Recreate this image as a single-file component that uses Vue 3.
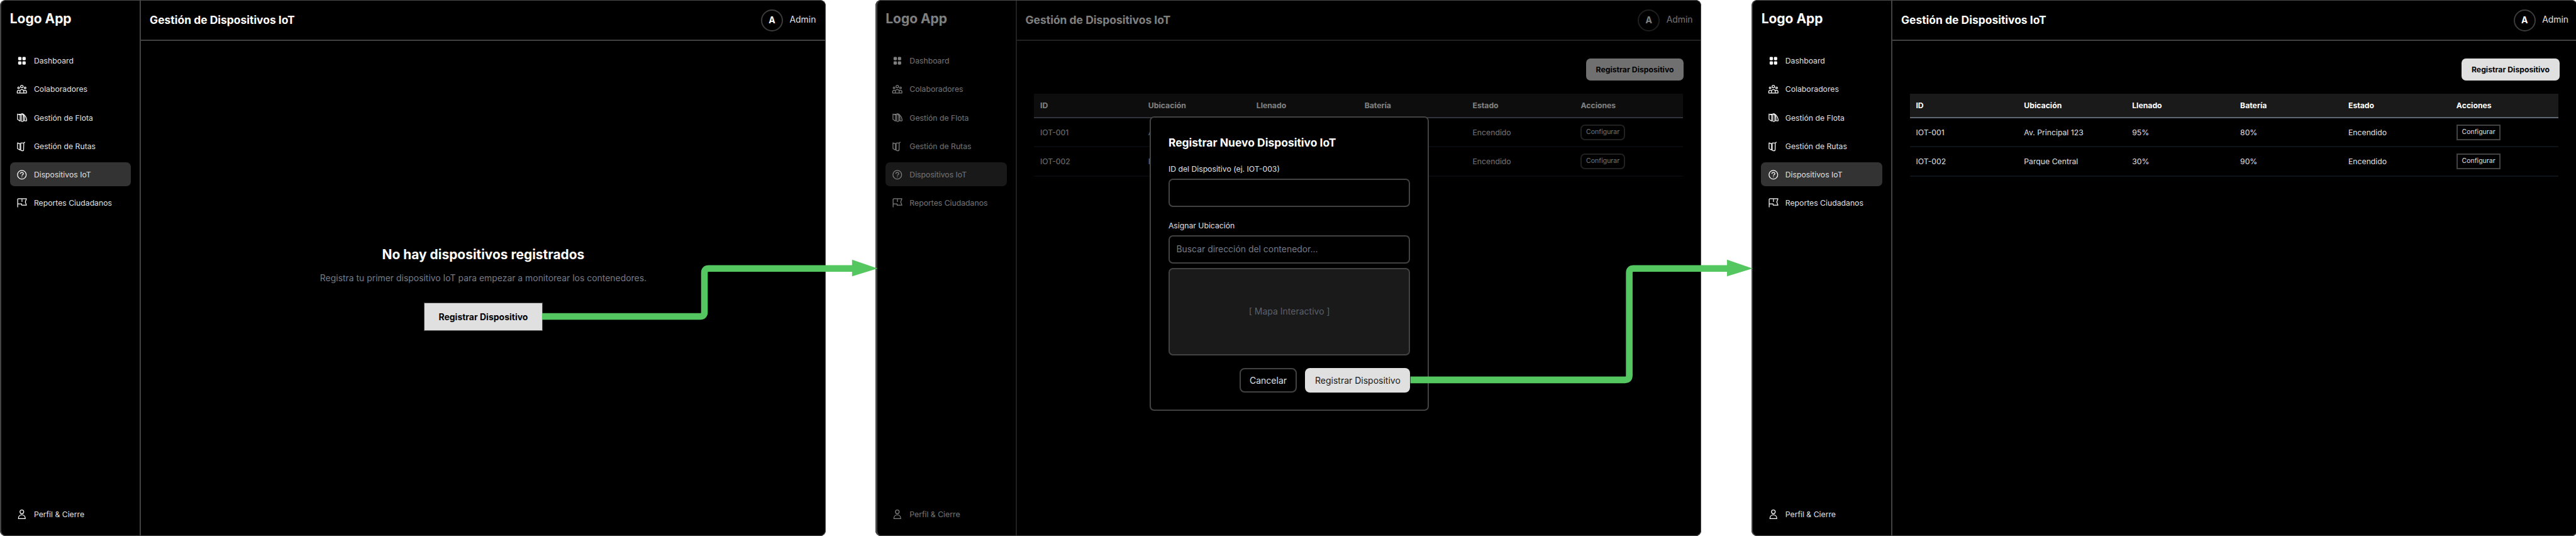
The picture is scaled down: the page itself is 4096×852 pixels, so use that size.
<script setup>
const nav = [
  { icon: 'dashboard', label: 'Dashboard' },
  { icon: 'team', label: 'Colaboradores' },
  { icon: 'fleet', label: 'Gestión de Flota' },
  { icon: 'routes', label: 'Gestión de Rutas' },
  { icon: 'device', label: 'Dispositivos IoT', active: true },
  { icon: 'flag', label: 'Reportes Ciudadanos' },
]

const columns = ['ID', 'Ubicación', 'Llenado', 'Batería', 'Estado', 'Acciones']
const devices = [
  ['IOT-001', 'Av. Principal 123', '95%', '80%', 'Encendido'],
  ['IOT-002', 'Parque Central', '30%', '90%', 'Encendido'],
]

const screens = ['empty', 'modal', 'list']
</script>

<template>
  <div class="board">
    <section v-for="screen in screens" :key="screen" class="screen" :class="screen">
      <aside class="sidebar">
        <div class="logo">Logo App</div>
        <nav class="nav">
          <a v-for="item in nav" :key="item.label" class="item" :class="{ active: item.active }">
            <svg class="icon" viewBox="0 0 24 24">
              <g v-if="item.icon === 'dashboard'" class="solid">
                <rect x="3.9" y="3.5" width="7.2" height="7.2" rx="2" />
                <rect x="13.2" y="3.5" width="7.2" height="7.2" rx="2" />
                <rect x="3.9" y="12.9" width="7.2" height="7.2" rx="2" />
                <rect x="13.2" y="12.9" width="7.2" height="7.2" rx="2" />
              </g>
              <g v-else-if="item.icon === 'team'">
                <circle cx="12" cy="6.3" r="2.8" />
                <circle cx="4.9" cy="9.4" r="1.9" />
                <circle cx="19.1" cy="9.4" r="1.9" />
                <path d="M7.8 20.3V17a4.2 4.2 0 0 1 8.4 0v3.3" />
                <path d="M7.6 14.7H4.6A2.8 2.8 0 0 0 1.9 17.5v2.8h20.2v-2.8a2.8 2.8 0 0 0-2.7-2.8h-3" />
              </g>
              <g v-else-if="item.icon === 'fleet'">
                <path d="M2.6 3.6v12.6l5.6 3.6V6.4L3.6 5" />
                <path d="M5.4 4.8h5.2M8.2 6.4l3-2.4h2.6c4.4 2 8.8 8.6 8.8 14.2 0 1-.7 1.4-1.7 1.3l-5-.9" />
                <path d="M10.8 7v13c1 1.1 3.2 1.1 4.4 0V7c-.8-2.4-3.600-2.400-4.400 0z" />
                <path d="M15.2 6.2c2.2 3 3 8 2.4 12" />
              </g>
              <g v-else-if="item.icon === 'routes'">
                <path d="M2.6 4.4v12.4l5.4 3V6.3z" />
                <path d="M8 6.3l2-1.6 6.6-.5 2.2-1.7" />
                <path d="M9.6 6v14.2c1.4 1.8 4.6 1.8 6.2 0l.4-15.6" />
              </g>
              <g v-else-if="item.icon === 'device'">
                <circle cx="12" cy="12" r="9.5" />
                <path d="M8.6 9.8c.2-1.9 1.6-2.9 3.4-2.9s3.3 1.1 3.3 2.8c0 2.3-3.2 2.3-3.2 4.4" />
                <path d="M12.1 15.7v1.9" />
              </g>
              <g v-else>
                <path d="M2.9 21.3V4.2a1.5 1.5 0 0 1 1.5-1.5H22l-2.500 7 2.500 6.900H11.500V14H3.300" />
                <path d="M12.3 3v6.7" />
              </g>
            </svg>
            {{ item.label }}
          </a>
        </nav>
        <a class="item profile">
          <svg class="icon" viewBox="0 0 24 24">
            <circle cx="12" cy="6.2" r="4.1" />
            <path d="M4.600 21.100v-.8C4.600 16 7.800 13 12 13s7.400 3 7.400 7.300v.8z" />
          </svg>
          Perfil &amp; Cierre
        </a>
      </aside>

      <div class="main">
        <header class="header">
          <h1 class="title">Gestión de Dispositivos IoT</h1>
          <div class="avatar">A</div>
          <span class="user">Admin</span>
        </header>

        <div v-if="screen === 'empty'" class="blank">
          <h2 class="blank-title">No hay dispositivos registrados</h2>
          <p class="blank-text">
            Registra tu primer dispositivo IoT para empezar a monitorear los contenedores.
          </p>
          <button class="blank-button">Registrar Dispositivo</button>
        </div>

        <div v-else class="content">
          <button class="register">Registrar Dispositivo</button>
          <div class="table">
            <div class="row head">
              <span v-for="column in columns" :key="column">{{ column }}</span>
            </div>
            <div v-for="device in devices" :key="device[0]" class="row">
              <span v-for="(cell, i) in device" :key="i">{{ cell }}</span>
              <span><button class="configure">Configurar</button></span>
            </div>
          </div>
        </div>
      </div>

      <div v-if="screen === 'modal'" class="overlay">
        <div class="dialog">
          <h2 class="dialog-title">Registrar Nuevo Dispositivo IoT</h2>
          <label class="label">ID del Dispositivo (ej. IOT-003)</label>
          <div class="input"></div>
          <label class="label">Asignar Ubicación</label>
          <div class="input search">Buscar dirección del contenedor...</div>
          <div class="map">[ Mapa Interactivo ]</div>
          <div class="actions">
            <button class="cancel">Cancelar</button>
            <button class="confirm">Registrar Dispositivo</button>
          </div>
        </div>
      </div>
    </section>

    <svg class="flow" viewBox="0 0 5850 1217" preserveAspectRatio="none">
      <path class="line" d="M1231 718.5H1589.7Q1599.7 718.5 1599.7 708.5V619.5Q1599.7 609.5 1609.7 609.5H1936" />
      <path class="tip" d="M1935 589.5L1993 609.5L1935 627.5z" />
      <path class="line" d="M3203 862.5H3690Q3700 862.5 3700 852.5V619.5Q3700 609.5 3710 609.5H3924" />
      <path class="tip" d="M3922 589.5L3980 609.5L3922 627.5z" />
    </svg>
  </div>
</template>

<style>
html {
  font-size: 8.7521px;
}
body {
  margin: 0;
  background: #fff;
}
</style>

<style scoped>
.board {
  position: relative;
  display: flex;
  gap: 9.1rem;
  width: 4096px;
  height: 852px;
  overflow: hidden;
  font-family: Inter, sans-serif;
  font-size: 1.398rem;
  line-height: 1.4;
  color: #e0e0e0;
}
.board *,
.board *::after {
  box-sizing: border-box;
}
h1,
h2,
p {
  margin: 0;
}
button {
  font: inherit;
  color: inherit;
  padding: 0;
  border: 0;
  background: none;
}

.screen {
  position: relative;
  flex: none;
  display: flex;
  width: 150rem;
  height: 852px;
  overflow: hidden;
  background: #000;
  border-radius: 1rem;
}
.screen::after {
  content: '';
  position: absolute;
  inset: 0;
  border: 1px solid #4a4a4a;
  border-left: 2px solid #444;
  border-radius: 1rem;
  pointer-events: none;
}
.screen.modal::after {
  border-left-width: 3px;
}

.sidebar {
  display: flex;
  flex-direction: column;
  flex: none;
  width: 25.6rem;
  padding: 1.68rem 1.56rem 1.7rem 1.78rem;
  border-right: 2px solid #424242;
}
.logo {
  margin-left: 0.02rem;
  height: 3.36rem;
  font-size: 2.395rem;
  font-weight: 700;
  color: #fff;
}
.nav {
  display: flex;
  flex-direction: column;
  gap: 0.8rem;
  margin-top: 3.84rem;
}
.item {
  display: flex;
  align-items: center;
  gap: 1.2rem;
  height: 4.36rem;
  padding: 0 1.18rem;
  border-radius: 0.8rem;
  white-space: nowrap;
}
.item.active {
  background: #333;
}
.profile {
  margin-top: auto;
}
.icon {
  flex: none;
  width: 2rem;
  height: 2rem;
  fill: none;
  stroke: #fff;
  stroke-width: 1.7;
  stroke-linejoin: round;
}
.icon .solid {
  fill: #fff;
  stroke: none;
}

.main {
  display: flex;
  flex-direction: column;
  flex: 1;
}
.header {
  display: flex;
  align-items: center;
  flex: none;
  height: 7.45rem;
  padding: 0.1rem 1.76rem 0 1.6rem;
  border-bottom: 2px solid #424242;
}
.title {
  flex: 1;
  font-size: 1.995rem;
  font-weight: 700;
  color: #fff;
}
.avatar {
  display: flex;
  align-items: center;
  justify-content: center;
  width: 4rem;
  height: 4rem;
  margin-right: 1.2rem;
  border: 2px solid #3c3c3c;
  border-radius: 50%;
  font-size: 1.6rem;
  font-weight: 700;
  color: #fff;
}
.user {
  font-size: 1.592rem;
}

.blank {
  display: flex;
  flex-direction: column;
  align-items: center;
  justify-content: center;
  flex: 1;
  padding-bottom: 0.1rem;
}
.blank-title {
  font-size: 2.39rem;
  font-weight: 700;
  color: #fff;
}
.blank-text {
  margin-top: 1.6rem;
  font-size: 1.592rem;
  color: #757a85;
}
.blank-button {
  width: 21.5rem;
  height: 5.2rem;
  margin-top: 3.2rem;
  border: 1px solid #4a4a4a;
  background: #e0e0e0;
  font-size: 1.6rem;
  font-weight: 700;
  color: #000;
}

.content {
  display: flex;
  flex-direction: column;
  padding: 3.2rem 3.38rem 0 3.18rem;
}
.register {
  align-self: flex-end;
  width: 17.8rem;
  height: 3.96rem;
  border-radius: 0.8rem;
  background: #e0e0e0;
  font-weight: 700;
  color: #000;
}
.table {
  margin-top: 2.38rem;
  margin-right: 0.2rem;
}
.row {
  display: grid;
  grid-template-columns: repeat(6, 19.64rem);
  align-items: center;
  height: 5.28rem;
  border-bottom: 2px solid #0e1318;
  overflow: hidden;
}
.row > span {
  padding-left: 1.1rem;
}
.row.head {
  height: 4.52rem;
  border-bottom-color: #606672;
  background: #1a1a1a;
  font-weight: 700;
  color: #fff;
}
.configure {
  display: block;
  width: 8.05rem;
  height: 2.8rem;
  border: 2px solid #424242;
  font-size: 1.2rem;
  color: #e0e0e0;
}
.modal .configure {
  border-radius: 0.8rem;
}

.overlay {
  position: absolute;
  inset: 0;
  display: flex;
  align-items: flex-start;
  justify-content: center;
  padding-top: 21.1rem;
  background: rgba(0, 0, 0, 0.5);
}
.dialog {
  width: 50.8rem;
  height: 53.5rem;
  margin-left: 0.3rem;
  padding: 3.2rem;
  border: 2px solid #424242;
  border-radius: 0.8rem;
  background: #000;
}
.dialog-title {
  margin-bottom: 2.4rem;
  font-size: 1.998rem;
  font-weight: 700;
  color: #fff;
}
.label {
  display: block;
  margin-bottom: 0.8rem;
}
.input {
  display: flex;
  align-items: center;
  height: 5.1rem;
  margin-bottom: 2.4rem;
  padding: 0 1.2rem;
  border: 2px solid #424242;
  border-radius: 0.8rem;
  font-size: 1.592rem;
  color: #757a85;
}
.search {
  margin-bottom: 0.8rem;
}
.map {
  display: flex;
  align-items: center;
  justify-content: center;
  height: 15.9rem;
  border: 2px solid #424242;
  border-radius: 0.8rem;
  background: #1a1a1a;
  font-size: 1.6rem;
  color: #59606d;
}
.actions {
  display: flex;
  justify-content: flex-end;
  gap: 1.57rem;
  margin-top: 2.3rem;
  font-size: 1.6rem;
}
.cancel,
.confirm {
  height: 4.46rem;
  border-radius: 0.9rem;
}
.cancel {
  width: 10.3rem;
  border: 2px solid #424242;
}
.confirm {
  width: 19.1rem;
  background: #e0e0e0;
  color: #1a1a1a;
}

.flow {
  position: absolute;
  inset: 0;
  width: 100%;
  height: 100%;
  pointer-events: none;
}
.flow .line {
  fill: none;
  stroke: #55c760;
  stroke-width: 15.2;
}
.flow .tip {
  fill: #55c760;
}
</style>
